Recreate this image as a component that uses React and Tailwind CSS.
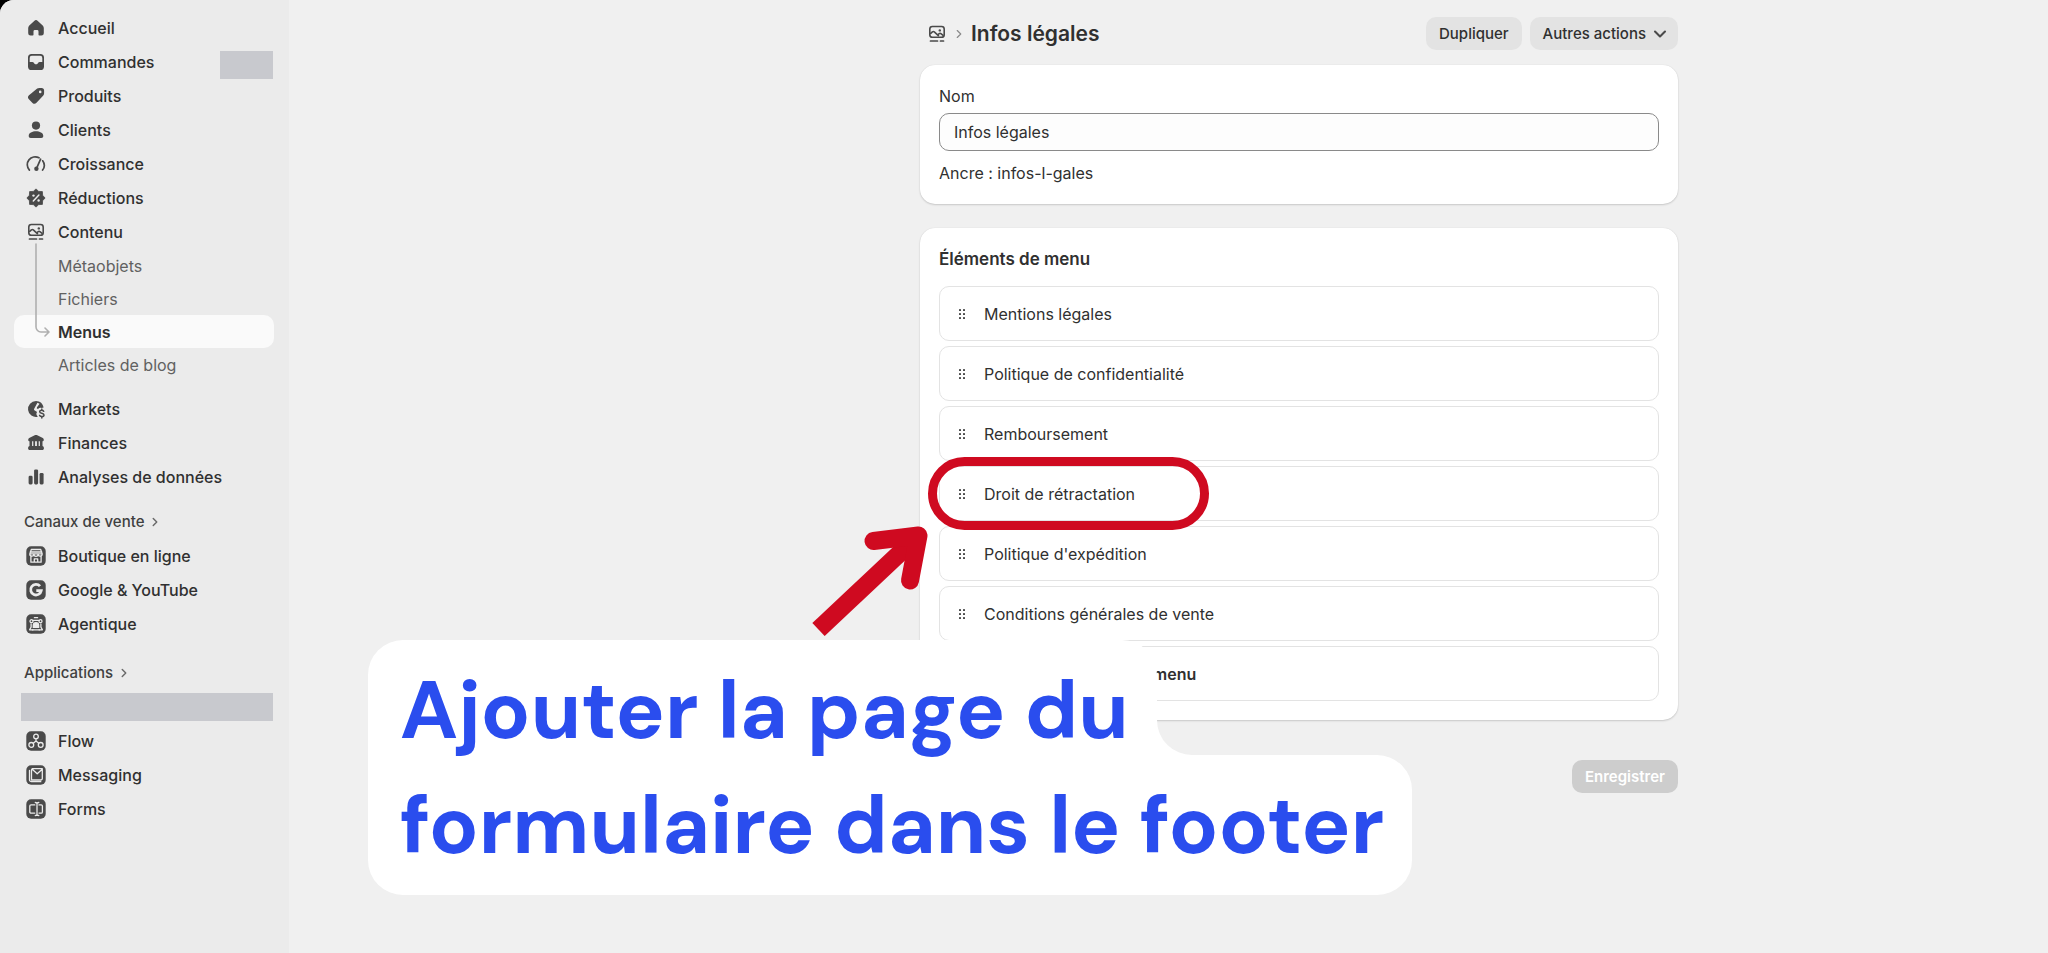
import React from 'react';
import { ChevronDown, ChevronRight, CirclePlus } from 'lucide-react';

const Icon = ({ children, className = '' }) => (
  <svg viewBox="0 0 20 20" fill="currentColor" aria-hidden="true" className={`size-5 shrink-0 ${className}`}>
    {children}
  </svg>
);

const HomeIcon = () => (
  <Icon>
    <path d="M8.2 2.9a2.7 2.7 0 0 1 3.6 0l4.9 4.6c.7.7 1.1 1.6 1.1 2.5v5.2a2.4 2.4 0 0 1-2.4 2.4h-2.1a.8.8 0 0 1-.8-.8v-3.3a1.4 1.4 0 0 0-1.4-1.4H8.9a1.4 1.4 0 0 0-1.4 1.4v3.3a.8.8 0 0 1-.8.8H4.6a2.4 2.4 0 0 1-2.4-2.4V10c0-.9.4-1.8 1.1-2.5z" />
  </Icon>
);

const OrdersIcon = () => (
  <Icon>
    <path
      fillRule="evenodd"
      d="M5.6 2h8.8A3.6 3.6 0 0 1 18 5.6v8.8a3.6 3.6 0 0 1-3.6 3.6H5.6A3.6 3.6 0 0 1 2 14.4V5.6A3.6 3.6 0 0 1 5.6 2zm.2 1.8A2.1 2.1 0 0 0 3.7 5.9V10h2.7c.5 0 .9.2 1.2.6l.9 1.2c.2.3.5.4.8.4h1.4c.3 0 .6-.1.8-.4l.9-1.2c.3-.4.7-.6 1.2-.6h2.7V5.9a2.1 2.1 0 0 0-2.1-2.1z"
    />
  </Icon>
);

const ProductsIcon = () => (
  <Icon>
    <path
      fillRule="evenodd"
      d="M11.2 2.6c.6-.5 1.3-.7 2-.7h2.3A2.6 2.6 0 0 1 18.1 4.5v2.8c0 .8-.3 1.5-.8 2.1l-6.8 7.4a2.8 2.8 0 0 1-4 .1l-3.6-3.6a2.8 2.8 0 0 1 .1-4zM14.2 7.2a1.3 1.3 0 1 0 0-2.6 1.3 1.3 0 0 0 0 2.6z"
    />
  </Icon>
);

const CustomersIcon = () => (
  <Icon>
    <circle cx="10" cy="5.6" r="4.1" />
    <path d="M2.7 15.9c0-3 3.7-4.6 7.3-4.6s7.3 1.6 7.3 4.6c0 1.2-.8 2-2 2H4.7c-1.2 0-2-.8-2-2z" />
  </Icon>
);

const GrowthIcon = () => (
  <Icon>
    <path
      fill="none"
      stroke="currentColor"
      strokeWidth="1.7"
      strokeLinecap="round"
      d="M3.4 16.1A7.9 7.9 0 0 1 13 3.8M16.7 6.8a7.9 7.9 0 0 1-.1 9.3M14.6 5.2l-3.5 8"
    />
    <circle cx="10.4" cy="14.8" r="2.2" />
  </Icon>
);

const DiscountIcon = () => (
  <Icon>
    <path
      d="M10 .9l2.7 2.5 3.7.2.2 3.7L19.1 10l-2.5 2.7-.2 3.7-3.7.2L10 19.1l-2.7-2.5-3.7-.2-.2-3.7L.9 10l2.5-2.7.2-3.7 3.7-.2z"
      stroke="currentColor"
      strokeWidth=".8"
      strokeLinejoin="round"
    />
    <path d="M7.3 12.9l5.6-5.8" stroke="#ebebeb" strokeWidth="1.5" strokeLinecap="round" />
    <circle cx="7.5" cy="7.6" r="1.2" fill="#ebebeb" />
    <circle cx="12.6" cy="12.5" r="1.2" fill="#ebebeb" />
  </Icon>
);

const ContentIcon = () => (
  <Icon>
    <rect x="2.8" y="2.5" width="14.4" height="10.8" rx="2.6" fill="none" stroke="currentColor" strokeWidth="1.6" />
    <path
      d="M3.2 9.8l2.2-1.9c.6-.5 1.3-.5 1.9 0l4.6 4.3M10.6 11l1.6-1.3c.5-.4 1.2-.4 1.7 0l2.5 2"
      fill="none"
      stroke="currentColor"
      strokeWidth="1.6"
    />
    <circle cx="12.8" cy="6.4" r="1.2" />
    <path d="M3.5 17h7M13.5 17h3" fill="none" stroke="currentColor" strokeWidth="1.7" strokeLinecap="round" />
  </Icon>
);

const MarketsIcon = () => (
  <Icon>
    <path
      fillRule="evenodd"
      d="M10 2a8 8 0 1 0 1.8 15.8l-1-1.6c-.7-1.2-.4-2.3.3-3.2L8.8 11.6c-.7-.4-1-1.2-.6-1.9l3.2-5.9 2.2.9-2.6 3.6-.2 1.2 1.3.4c.7-.9 2-1.3 3.5-.9l2-.4C17 4.8 14 2 10 2z"
    />
    <path
      d="M17.7 12.3c-.4-.7-1.1-1-2-1-1.2 0-2 .6-2 1.5 0 2.1 4.3 1 4.3 3.2 0 1-.9 1.6-2.2 1.6-1 0-1.8-.4-2.2-1.2M15.8 10v1.3M15.8 17.6V19"
      fill="none"
      stroke="currentColor"
      strokeWidth="1.5"
      strokeLinecap="round"
    />
  </Icon>
);

const FinanceIcon = () => (
  <Icon>
    <path d="M8.7 2.3c.8-.4 1.8-.4 2.6 0l5.5 2.8c.6.3 1 .9 1 1.6 0 .9-.7 1.6-1.6 1.6H3.8c-.9 0-1.6-.7-1.6-1.6 0-.7.4-1.3 1-1.6z" />
    <path d="M3.5 8h2.6v6H3.5zM7.3 8h1.8v6H7.3zM10.9 8h1.8v6h-1.8zM13.9 8h2.6v6h-2.6z" />
    <path d="M3.9 13.1h12.2c1 0 1.8.9 1.8 1.9v.6c0 .9-.7 1.5-1.5 1.5H3.6c-.8 0-1.5-.6-1.5-1.5V15c0-1 .8-1.9 1.8-1.9z" />
  </Icon>
);

const AnalyticsIcon = () => (
  <Icon>
    <rect x="2.6" y="8.8" width="4" height="8.6" rx="1.3" />
    <rect x="8.1" y="2.5" width="4" height="14.9" rx="1.3" />
    <rect x="13.6" y="6" width="4" height="11.4" rx="1.3" />
  </Icon>
);

// Rounded dark tile shared by the channel and app icons
const Tile = ({ children }) => (
  <Icon>
    <rect x=".3" y=".3" width="19.4" height="19.4" rx="4.8" />
    <g fill="none" stroke="#ebebeb" strokeWidth="1.3" strokeLinecap="round" strokeLinejoin="round">
      {children}
    </g>
  </Icon>
);

const StoreIcon = () => (
  <Tile>
    <path d="M5.3 3.5h9.4l1.5 4.4H3.8zM4.2 6h11.6M3.8 8a2 2 0 0 0 4.1.2 2 2 0 0 0 4.2 0A2 2 0 0 0 16.2 8M4.9 10.5v5.7h10.2v-5.7M8.3 16v-3.2h3.4V16" />
  </Tile>
);

const GoogleIcon = () => (
  <Tile>
    <path d="M14 6.2A5.3 5.3 0 1 0 15.2 10.7H10.3" strokeWidth="2.8" strokeLinecap="butt" strokeLinejoin="miter" />
  </Tile>
);

const AgentIcon = () => (
  <Tile>
    <path d="M8.4 3.7h3.2M7 15.8H3.6l1.5-2.7V9.9M13 15.8h3.4l-1.5-2.7V9.9M6.9 6.4h6.2" />
    <circle cx="5.5" cy="7.2" r="1.5" />
    <circle cx="14.5" cy="7.2" r="1.5" />
    <path d="M7.3 13.4v-2a2.7 2.7 0 0 1 5.4 0v2z" fill="#ebebeb" />
    <path d="M6.4 15.8h7.2" />
  </Tile>
);

const FlowIcon = () => (
  <Tile>
    <circle cx="10" cy="5.4" r="2.3" />
    <circle cx="5.3" cy="13.9" r="2.4" />
    <circle cx="14.7" cy="13.9" r="2.4" />
    <path d="M10 7.8v2.2M10 9.9l-2.5 2.2M10 9.9l2.5 2.2" />
  </Tile>
);

const MessagingIcon = () => (
  <Tile>
    <path d="M6.3 3.7h10v9.7a1.6 1.6 0 0 1-1.6 1.6H5.5V4.9zM6.2 4.2l5 4.5 5-4.5M3.5 5.5v9.2a2 2 0 0 0 2 2h9.3" />
  </Tile>
);

const FormsIcon = () => (
  <Tile>
    <path d="M8.8 5.9H5A1.2 1.2 0 0 0 3.8 7.1v5.8A1.2 1.2 0 0 0 5 14.1h3.8M13 5.9h2.2a1.2 1.2 0 0 1 1.2 1.2v5.8a1.2 1.2 0 0 1-1.2 1.2H13M9.3 3.5c1 0 1.7.4 1.7 1.2v10.6c0 .8-.7 1.2-1.7 1.2M12.8 3.5c-1 0-1.8.4-1.8 1.2M12.8 16.5c-1 0-1.8-.4-1.8-1.2" />
  </Tile>
);

const mainLinks = [
  { label: 'Accueil', icon: HomeIcon },
  { label: 'Commandes', icon: OrdersIcon, masked: true },
  { label: 'Produits', icon: ProductsIcon },
  { label: 'Clients', icon: CustomersIcon },
  { label: 'Croissance', icon: GrowthIcon },
  { label: 'Réductions', icon: DiscountIcon },
  { label: 'Contenu', icon: ContentIcon },
];

const contentLinks = ['Métaobjets', 'Fichiers', 'Menus', 'Articles de blog'];

const reportLinks = [
  { label: 'Markets', icon: MarketsIcon },
  { label: 'Finances', icon: FinanceIcon },
  { label: 'Analyses de données', icon: AnalyticsIcon },
];

const channelLinks = [
  { label: 'Boutique en ligne', icon: StoreIcon },
  { label: 'Google & YouTube', icon: GoogleIcon },
  { label: 'Agentique', icon: AgentIcon },
];

const appLinks = [
  { label: 'Flow', icon: FlowIcon },
  { label: 'Messaging', icon: MessagingIcon },
  { label: 'Forms', icon: FormsIcon },
];

const menuItems = [
  { label: 'Mentions légales' },
  { label: 'Politique de confidentialité' },
  { label: 'Remboursement' },
  { label: 'Droit de rétractation', highlighted: true },
  { label: "Politique d'expédition" },
  { label: 'Conditions générales de vente' },
];

const NavList = ({ links }) => (
  <ul>
    {links.map(({ label, icon: LinkIcon, masked }) => (
      <li key={label} className="flex h-[34px] items-center">
        <a href="#" className="flex flex-1 items-center gap-3 pl-3 font-medium text-[#303030]">
          <span className="text-[#4a4a4a]">
            <LinkIcon />
          </span>
          {label}
        </a>
        {masked && <span className="mr-px h-7 w-[53px] self-end bg-[#c8c9ce]" />}
      </li>
    ))}
  </ul>
);

const NavHeading = ({ children }) => (
  <h2 className="flex h-[34px] items-center gap-1 pl-2.5 text-[15px] font-medium text-[#404040]">
    {children}
    <ChevronRight size={14} strokeWidth={2.5} className="text-[#6a6a6a]" />
  </h2>
);

const Sidebar = () => (
  <aside className="w-[289px] shrink-0 bg-[#ebebeb] pt-[11px] pr-[15px] pl-3.5">
    <nav>
      <NavList links={mainLinks} />
      <ul className="relative">
        {contentLinks.map(label => (
          <li key={label}>
            <a
              href="#"
              className={
                label === 'Menus'
                  ? 'flex h-[33px] items-center rounded-[10px] bg-[#fafafa] pl-11 font-semibold text-[#303030]'
                  : 'flex h-[33px] items-center pl-11 text-[#616161]'
              }
            >
              {label}
            </a>
          </li>
        ))}
        <svg
          viewBox="0 0 16 96"
          fill="none"
          stroke="#b0b0b0"
          strokeWidth="1.6"
          strokeLinecap="round"
          strokeLinejoin="round"
          aria-hidden="true"
          className="absolute -top-1.5 left-[21px] h-24 w-4"
        >
          <path d="M1 1v83a5 5 0 0 0 5 5h7M10 85l4 4-4 4" />
        </svg>
      </ul>
      <div className="mt-[11px]">
        <NavList links={reportLinks} />
      </div>
      <div className="mt-[11px]">
        <NavHeading>Canaux de vente</NavHeading>
        <NavList links={channelLinks} />
      </div>
      <div className="mt-[15px]">
        <NavHeading>Applications</NavHeading>
        <div className="flex h-[34px] items-center pr-px pl-[7px]">
          <span className="h-7 flex-1 bg-[#c8c9ce]" />
        </div>
        <NavList links={appLinks} />
      </div>
    </nav>
  </aside>
);

const DragHandle = () => (
  <svg viewBox="0 0 8 12" fill="#4a4a4a" aria-hidden="true" className="h-3 w-2 shrink-0">
    {[2, 6, 10].map(y => (
      <React.Fragment key={y}>
        <rect x="1" y={y - 1} width="2" height="2" rx=".6" />
        <rect x="5" y={y - 1} width="2" height="2" rx=".6" />
      </React.Fragment>
    ))}
  </svg>
);

const MenuItem = ({ label, highlighted }) => (
  <li className="relative flex h-[55px] items-center gap-[18px] rounded-[10px] border border-[#e3e3e3] pl-[18px]">
    <DragHandle />
    {label}
    {highlighted && (
      <span className="absolute -top-2.5 -left-3 z-10 h-[73px] w-[281px] rounded-full border-[9px] border-[#cf0a20]" />
    )}
  </li>
);

const Card = ({ children, className = '' }) => (
  <section
    className={`rounded-[15px] bg-white p-[19px] shadow-[0_1px_2px_rgba(0,0,0,0.16),0_0_1px_rgba(0,0,0,0.12)] ${className}`}
  >
    {children}
  </section>
);

const Arrow = () => (
  <svg
    viewBox="0 0 120 120"
    fill="none"
    stroke="#cf0a20"
    strokeWidth="18"
    aria-hidden="true"
    className="absolute top-[522px] left-[808px] size-[120px]"
  >
    <path d="M10.5 107.5L110 14" />
    <path d="M65.5 19l45-5.5-8.5 45" strokeLinecap="round" strokeLinejoin="round" />
  </svg>
);

// The first line sits above the second so that its descenders stay visible
const Callout = () => (
  <p className="absolute top-[640px] left-[368px] z-20 flex flex-col items-start font-['DM_Sans','Inter',sans-serif] text-[82px] leading-[140px] font-bold whitespace-nowrap text-[#2a4dee]">
    <span className="relative z-10 h-[115px] rounded-t-[35px] bg-white pr-7 pl-8">
      Ajouter la page du
      <svg viewBox="0 0 35 35" fill="#fff" aria-hidden="true" className="absolute bottom-0 left-full size-[35px]">
        <path d="M0 0v35h35A35 35 0 0 1 0 0z" />
      </svg>
    </span>
    <span className="rounded-[35px] rounded-tl-none bg-white pr-7 pl-8">formulaire dans le footer</span>
  </p>
);

const App = () => (
  <div className="bg-black">
    <div className="relative flex min-h-screen overflow-hidden rounded-tl-[14px] bg-[#f0f0f0] font-['Inter',sans-serif] text-[16px] leading-6 text-[#303030]">
      <Sidebar />

      <main className="flex-1 pt-[17px] pr-[370px] pl-6">
        <div className="ml-auto max-w-[758px]">
          <header className="flex h-[33px] items-center text-[15px] font-medium">
            <span className="ml-[7px] text-[#4a4a4a]">
              <ContentIcon />
            </span>
            <ChevronRight size={14} strokeWidth={2} className="mx-[5px] text-[#8a8a8a]" />
            <h1 className="flex-1 text-[21px] font-semibold">Infos légales</h1>
            <button type="button" className="h-[33px] rounded-[10px] bg-[#e3e3e3] px-[13px]">
              Dupliquer
            </button>
            <button type="button" className="ml-2 flex h-[33px] items-center gap-1 rounded-[10px] bg-[#e3e3e3] pr-2 pl-[13px]">
              Autres actions
              <ChevronDown size={20} strokeWidth={2.5} className="text-[#4a4a4a]" />
            </button>
          </header>

          <Card className="mt-[15px]">
            <label htmlFor="menu-name" className="block">
              Nom
            </label>
            <input
              id="menu-name"
              type="text"
              defaultValue="Infos légales"
              className="mt-[5px] block h-[38px] w-full rounded-[10px] border border-[#8a8a8a] bg-[#fdfdfd] px-3.5"
            />
            <p className="mt-2.5">Ancre : infos-l-gales</p>
          </Card>

          <Card className="mt-6">
            <h2 className="text-[17px] font-semibold">Éléments de menu</h2>
            <ul className="mt-[15px] flex flex-col gap-[5px]">
              {menuItems.map(item => (
                <MenuItem key={item.label} {...item} />
              ))}
              <li>
                <button
                  type="button"
                  className="flex h-[55px] w-full items-center gap-2 rounded-[10px] border border-[#e3e3e3] pl-[13px] font-semibold"
                >
                  <CirclePlus size={18} />
                  Ajouter un élément au menu
                </button>
              </li>
            </ul>
          </Card>

          <div className="mt-10 flex justify-end">
            <button
              type="button"
              disabled
              className="h-[33px] rounded-[10px] bg-[#cdcdcd] px-[13px] text-[15px] font-semibold text-white"
            >
              Enregistrer
            </button>
          </div>
        </div>
      </main>

      <Arrow />
      <Callout />
    </div>
  </div>
);

export default App;
